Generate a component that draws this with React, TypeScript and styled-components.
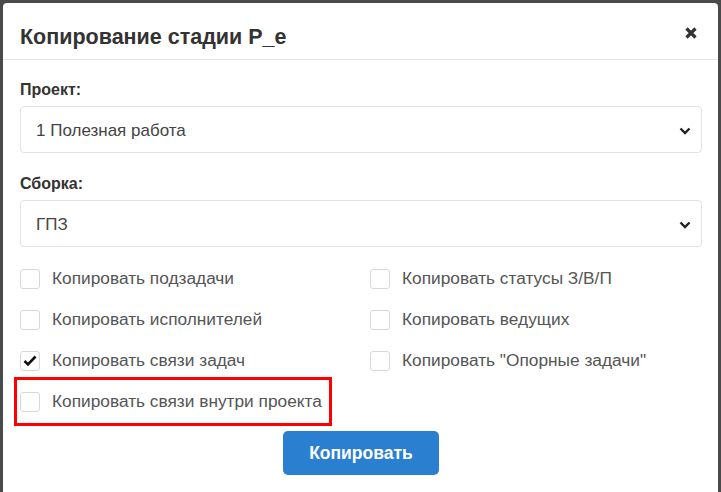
import styled, { createGlobalStyle } from 'styled-components'

const GlobalStyle = createGlobalStyle`
  html, body {
    margin: 0;
    padding: 0;
    background: #4a4a4a;
    font-family: "Liberation Sans", Arial, sans-serif;
  }
`

const Modal = styled.div`
  margin: 3px 3px 0 3px;
  height: 489px;
  background: #fff;
  border-radius: 4px 4px 0 0;
  box-sizing: border-box;
`

const Header = styled.div`
  height: 57px;
  box-sizing: border-box;
  border-bottom: 1px solid #e3e3e3;
  display: flex;
  align-items: flex-start;
  justify-content: space-between;
  padding: 0 20px 0 17px;
`

const Title = styled.h4`
  margin: 22px 0 0;
  font-size: 21.5px;
  line-height: 24px;
  font-weight: 700;
  color: #333;
`

const CloseButton = styled.button`
  border: 0;
  background: none;
  padding: 0;
  margin-top: 23px;
  width: 14px;
  height: 14px;
  display: flex;
  cursor: pointer;
`

const Body = styled.div`
  padding: 20px 16px 0 17px;
  display: flex;
  flex-direction: column;
`

const Label = styled.div`
  font-size: 16px;
  line-height: 20px;
  font-weight: 700;
  color: #333;
  margin-bottom: 6px;
`

const Select = styled.div<{ $mb: number }>`
  height: 47px;
  box-sizing: border-box;
  border: 1px solid #e2e2e2;
  border-radius: 4px;
  display: flex;
  align-items: center;
  justify-content: space-between;
  padding: 2px 10px 0 15px;
  font-size: 17px;
  color: #444;
  margin-bottom: ${({ $mb }) => $mb}px;
`

const Options = styled.div`
  display: grid;
  grid-template-columns: 350px 1fr;
  grid-auto-rows: 41px;
  margin-top: 11px;
`

const Option = styled.label`
  display: flex;
  align-items: center;
  gap: 12px;
  font-size: 17.3px;
  color: #555;
  height: 41px;
`

const Box = styled.span`
  width: 20px;
  height: 20px;
  box-sizing: border-box;
  border: 1px solid #d8d8d8;
  border-radius: 3px;
  display: flex;
  align-items: center;
  justify-content: center;
  flex-shrink: 0;
`

const Highlight = styled.div`
  justify-self: start;
  border: 3px solid #f00;
  padding: 1px 7px 1px 3px;
  margin: -4px 0 -4px -6px;
`

const Footer = styled.div`
  display: flex;
  justify-content: center;
  margin-top: 9px;
`

const PrimaryButton = styled.button`
  width: 156px;
  height: 44px;
  border: 0;
  border-radius: 5px;
  background: #2a7fd0;
  color: #fff;
  font-family: "Liberation Sans", Arial, sans-serif;
  font-size: 17.5px;
  font-weight: 700;
  cursor: pointer;
`

function Chevron() {
  return (
    <svg width="12" height="8" viewBox="0 0 12 8">
      <path d="M1.5 1.5 L6 6 L10.5 1.5" fill="none" stroke="#222" strokeWidth="2.4" />
    </svg>
  )
}

function Check({ checked, label }: { checked?: boolean; label: string }) {
  return (
    <Option>
      <Box>
        {checked && (
          <svg width="14" height="12" viewBox="0 0 14 12">
            <path d="M1.5 6 L5 9.5 L12.5 1.5" fill="none" stroke="#111" strokeWidth="2.6" />
          </svg>
        )}
      </Box>
      {label}
    </Option>
  )
}

export default function App() {
  return (
    <>
      <GlobalStyle />
      <Modal>
        <Header>
          <Title>Копирование стадии Р_е</Title>
          <CloseButton aria-label="close">
            <svg width="14" height="14" viewBox="0 0 14 14">
              <path d="M2.5 2.5 L11.5 11.5 M11.5 2.5 L2.5 11.5" stroke="#333" strokeWidth="3.2" />
            </svg>
          </CloseButton>
        </Header>
        <Body>
          <Label>Проект:</Label>
          <Select $mb={21}>
            1 Полезная работа
            <Chevron />
          </Select>
          <Label>Сборка:</Label>
          <Select $mb={0}>
            ГПЗ
            <Chevron />
          </Select>
          <Options>
            <Check label="Копировать подзадачи" />
            <Check label="Копировать статусы З/В/П" />
            <Check label="Копировать исполнителей" />
            <Check label="Копировать ведущих" />
            <Check checked label="Копировать связи задач" />
            <Check label={'Копировать "Опорные задачи"'} />
            <Highlight>
              <Check label="Копировать связи внутри проекта" />
            </Highlight>
          </Options>
          <Footer>
            <PrimaryButton>Копировать</PrimaryButton>
          </Footer>
        </Body>
      </Modal>
    </>
  )
}
